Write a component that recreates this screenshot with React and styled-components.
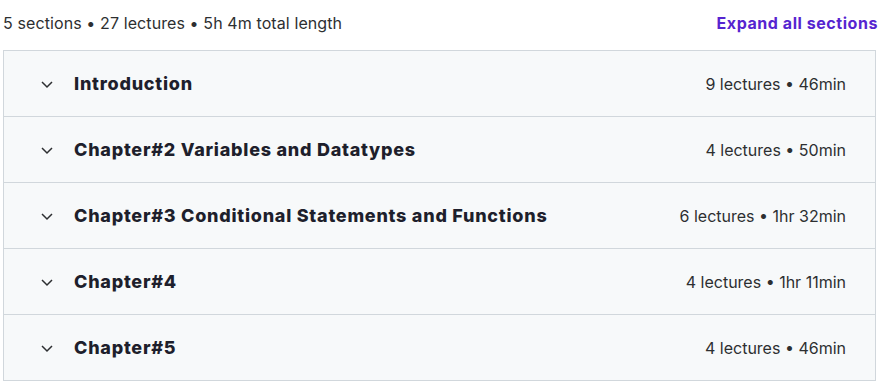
import React from 'react';
import styled, { createGlobalStyle } from 'styled-components';

const GlobalStyle = createGlobalStyle`
	body {
		margin: 0;
		background: #fff;
		font-family: Inter, "Noto Sans", sans-serif;
		color: #2d2f31;
	}
`;

const sections = [
	{ title: 'Introduction', meta: '9 lectures • 46min' },
	{ title: 'Chapter#2 Variables and Datatypes', meta: '4 lectures • 50min' },
	{ title: 'Chapter#3 Conditional Statements and Functions', meta: '6 lectures • 1hr 32min' },
	{ title: 'Chapter#4', meta: '4 lectures • 1hr 11min' },
	{ title: 'Chapter#5', meta: '4 lectures • 46min' }
];

const Wrapper = styled.div`
	width: 874px;
	padding-left: 3px;
`;

const Header = styled.div`
	display: flex;
	align-items: center;
	justify-content: space-between;
	height: 50px;
	padding-bottom: 4px;
	box-sizing: border-box;
`;

const Summary = styled.span`
	font-size: 16px;
	letter-spacing: 0.1px;
	color: #2d2f31;
`;

const ExpandButton = styled.button`
	border: 0;
	background: none;
	padding: 0;
	margin-right: -1px;
	font-family: inherit;
	font-size: 16px;
	font-weight: 700;
	letter-spacing: 0.55px;
	color: #5624d0;
	cursor: pointer;
`;

const Accordion = styled.div`
	border: 1px solid #d1d7dc;
	border-bottom: 0;
	width: 873px;
	box-sizing: border-box;
`;

const Row = styled.div`
	display: flex;
	align-items: center;
	height: 66px;
	box-sizing: border-box;
	padding: 0 29px 0 36px;
	background: #f7f9fa;
	border-bottom: 1px solid #d1d7dc;
`;

const Chevron = styled.svg`
	width: 14px;
	height: 14px;
	margin-right: 20px;
	fill: none;
	stroke: #2d2f31;
	stroke-width: 1.5px;
`;

const Title = styled.span`
	flex: 1;
	font-size: 18px;
	font-weight: 800;
	letter-spacing: 0.75px;
	color: #1e1f2c;
`;

const Meta = styled.span`
	font-size: 16px;
	color: #2d2f31;
`;

const App = () => (
	<Wrapper>
		<GlobalStyle />
		<Header>
			<Summary>5 sections • 27 lectures • 5h 4m total length</Summary>
			<ExpandButton>Expand all sections</ExpandButton>
		</Header>
		<Accordion>
			{sections.map(s => (
				<Row key={s.title}>
					<Chevron viewBox="0 0 14 14">
						<polyline points="2 5 7 10 12 5" />
					</Chevron>
					<Title>{s.title}</Title>
					<Meta>{s.meta}</Meta>
				</Row>
			))}
		</Accordion>
	</Wrapper>
);

export default App;
